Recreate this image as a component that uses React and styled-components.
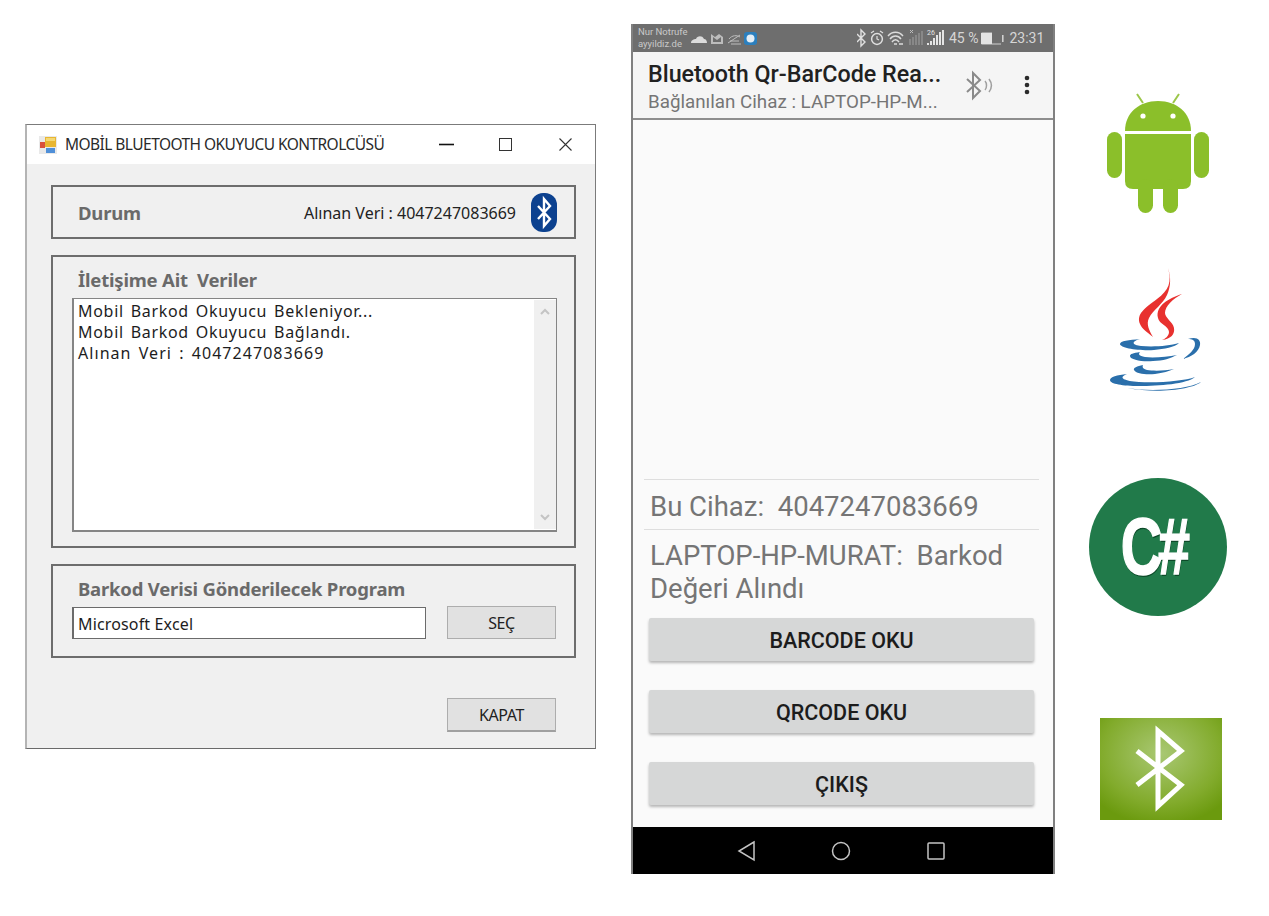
import React from 'react';
import styled, { createGlobalStyle } from 'styled-components';

const GlobalStyle = createGlobalStyle`
  html, body {
    margin: 0;
    background: #ffffff;
  }
`

const Page = styled.div`
  display: flex;
  align-items: flex-start;
  width: 1269px;
  height: 916px;
  overflow: hidden;
  background: #ffffff;
`

/* desktop window */
const Win = styled.div`
  box-sizing: border-box;
  width: 571px;
  height: 625px;
  margin: 124px 0 0 25px;
  display: flex;
  flex-direction: column;
  background: #f0f0f0;
  border-top: 1px solid #7b7b7b;
  border-right: 1px solid #7b7b7b;
  border-bottom: 1px solid #6a6a6a;
  border-left: 2px solid #b4b4b4;
  font-family: "Noto Sans", sans-serif;
`

const TitleBar = styled.div`
  height: 39px;
  flex: none;
  display: flex;
  align-items: center;
  padding-left: 12px;
  background: #ffffff;
`

const WinTitle = styled.span`
  margin-left: 8px;
  padding-bottom: 2px;
  flex: 1;
  font-size: 15.5px;
  letter-spacing: -0.55px;
  color: #2a2a2a;
  white-space: nowrap;
`

const WinCtrl = styled.svg`
  flex: none;
  width: 160px;
  height: 20px;
`

const WinBody = styled.div`
  flex: none;
  display: flex;
  flex-direction: column;
  gap: 16px;
  padding: 21px 19px 0 24px;
`

const Panel = styled.div`
  box-sizing: border-box;
  height: ${p => p.$h}px;
  border: 2px solid #6d6d6d;
  padding: 12px 17px 0 19px;
`

const StatusPanel = styled(Panel)`
  display: flex;
  align-items: center;
  padding: 0 17px 0 25px;
`

const PanelTitle = styled.div`
  height: 22px;
  line-height: 22px;
  margin: 0 0 ${p => p.$gap}px 6px;
  font-size: 18.5px;
  font-weight: 700;
  color: #6a6a6a;
  letter-spacing: -0.2px;
  white-space: pre;
`

const StatusLabel = styled(PanelTitle)`
  flex: 1;
  margin: 1px 0 0;
`

const Received = styled.span`
  font-size: 16px;
  color: #222222;
  white-space: nowrap;
  margin: 1px 15px 0 0;
`

const BtBadge = styled.svg`
  flex: none;
  width: 26px;
  height: 39px;
`

const LogBox = styled.div`
  box-sizing: border-box;
  width: 485px;
  height: 234px;
  display: flex;
  background: #ffffff;
  border: 1px solid #858585;
  border-bottom-width: 2px;
  border-left-width: 2px;
`

const LogLines = styled.div`
  flex: 1;
  padding: 2px 0 0 4px;
  font-size: 16px;
  line-height: 21px;
  letter-spacing: 0.7px;
  word-spacing: 2px;
  color: #1d1d1d;
`

const LogLine = styled.div`
  height: 21px;
  white-space: pre;
  letter-spacing: ${p => p.$wide ? '1.05px' : 'inherit'};
`

const ScrollTrack = styled.div`
  width: 22px;
  display: flex;
  flex-direction: column;
  justify-content: space-between;
  align-items: center;
  padding: 8px 0;
  background: #f0f0f0;
  margin: 1px 0;
`

const Row = styled.div`
  display: flex;
  align-items: flex-end;
  gap: 21px;
`

const TextInput = styled.div`
  box-sizing: border-box;
  width: 354px;
  height: 32px;
  padding-left: 4px;
  line-height: 32px;
  font-size: 16px;
  letter-spacing: 0.15px;
  color: #1d1d1d;
  background: #ffffff;
  border: 1px solid #6b6b6b;
  border-left-width: 2px;
`

const WinButton = styled.div`
  box-sizing: border-box;
  width: 109px;
  height: ${p => p.$h}px;
  display: flex;
  align-items: center;
  justify-content: center;
  font-size: 16px;
  letter-spacing: -0.4px;
  color: #222222;
  background: #e1e1e1;
  border: 1px solid #adadad;
  border-bottom: ${p => p.$thick ? '2px solid #a0a0a0' : '1px solid #adadad'};
`

const WinFooter = styled.div`
  display: flex;
  justify-content: flex-end;
  padding: 40px 39px 0 0;
`

/* phone */
const Phone = styled.div`
  box-sizing: border-box;
  width: 424px;
  height: 850px;
  margin: 24px 0 0 35px;
  display: flex;
  flex-direction: column;
  background: #fafafa;
  border-left: 2px solid #808080;
  border-right: 2px solid #808080;
  font-family: Roboto, sans-serif;
`

const StatusBar = styled.div`
  height: 28px;
  flex: none;
  display: flex;
  align-items: center;
  padding-left: 5px;
  background: #6e6e6e;
  color: #d6d6d6;
`

const Carrier = styled.div`
  width: 52px;
  font-size: 9.5px;
  line-height: 12px;
  color: #c9c9c9;
  white-space: nowrap;
`

const StatusIcons = styled.svg`
  flex: none;
  height: 28px;
  width: ${p => p.$w}px;
  margin-left: ${p => p.$ml || 0}px;
`

const StatusText = styled.span`
  font-size: ${p => p.$size}px;
  margin-left: ${p => p.$ml}px;
  white-space: nowrap;
`

const TinyLabel = styled.text`
  font-family: Roboto, sans-serif;
  font-size: 7px;
  fill: #e4e4e4;
`

const AppBar = styled.div`
  height: 66px;
  flex: none;
  display: flex;
  align-items: center;
  padding-left: 15px;
  background: #f5f5f5;
  border-bottom: 2px solid #8d8d8d;
`

const AppTitles = styled.div`
  width: 316px;
  padding-top: 4px;
  white-space: nowrap;
`

const AppTitle = styled.div`
  font-size: 23.3px;
  line-height: 28px;
  font-weight: 500;
  color: #212121;
`

const AppSub = styled.div`
  margin-top: 2px;
  font-size: 18.8px;
  line-height: 24px;
  color: #757575;
`

const BarIcon = styled.svg`
  flex: none;
  width: ${p => p.$w}px;
  height: 34px;
  margin-left: ${p => p.$ml}px;
`

const PhoneBody = styled.div`
  flex: 1;
  display: flex;
  flex-direction: column;
  justify-content: flex-end;
  padding: 0 14px 22px 11px;
`

const InfoRow = styled.div`
  padding: ${p => p.$pad};
  font-size: 27.5px;
  line-height: 33px;
  color: #757575;
  white-space: pre-wrap;
  border-top: 1px solid #dedede;
`

const PhoneButton = styled.div`
  box-sizing: border-box;
  height: 43px;
  margin: ${p => p.$top}px 5px 0 5px;
  padding-top: 1px;
  display: flex;
  align-items: center;
  justify-content: center;
  font-size: 21.5px;
  font-weight: 500;
  color: #1c1c1c;
  background: #d6d7d7;
  border-radius: 2px;
  box-shadow: 0 2px 3px rgba(0, 0, 0, 0.28);
`

const NavBar = styled.div`
  height: 47px;
  flex: none;
  display: flex;
  align-items: center;
  justify-content: center;
  background: #000000;
`

const NavIcons = styled.svg`
  width: 240px;
  height: 24px;
  margin-right: 4px;
`

/* logo column */
const Logos = styled.div`
  width: 138px;
  margin: 93px 0 0 34px;
  display: flex;
  flex-direction: column;
`

const Logo = styled.svg`
  display: block;
  width: ${p => p.$w}px;
  height: ${p => p.$h}px;
  margin: ${p => p.$top}px 0 0 ${p => p.$left}px;
`

const CSharp = styled.div`
  width: 138px;
  height: 138px;
  margin-top: 86px;
  display: flex;
  align-items: center;
  justify-content: center;
  border-radius: 50%;
  background: #217a4a;
`

const CSharpText = styled.span`
  margin-left: -10px;
  font-family: "Liberation Sans", sans-serif;
  font-size: 80px;
  line-height: 80px;
  font-weight: 700;
  color: #ffffff;
  letter-spacing: -6px;
  -webkit-text-stroke: 1.5px #ffffff;
  text-shadow: 1px 2px 0 #0d4a29;
  transform: scaleX(0.72);
`

function WindowIcon() {
  return (
    <svg width="18" height="18" viewBox="0 0 18 18">
      <rect x="0" y="0" width="18" height="18" fill="#e9e9e9" />
      <rect x="6" y="1" width="11" height="10" fill="#e8b632" />
      <rect x="7" y="2" width="9" height="3" fill="#f4d874" />
      <rect x="1" y="6" width="5" height="6" fill="#d9503c" />
      <rect x="7" y="12" width="9" height="5" fill="#4f8fd8" />
    </svg>
  );
}

function Chevron({ up }) {
  return (
    <svg width="10" height="7" viewBox="0 0 10 7">
      <path d={up ? 'M1 6 L5 2 L9 6' : 'M1 1 L5 5 L9 1'} fill="none" stroke="#c4c4c4" strokeWidth="2" />
    </svg>
  );
}

function JavaLogo() {
  return (
    <Logo $w={94} $h={124} $top={55} $left={20} viewBox="0 0 94 124">
      <g fill="#e8312f">
        <path d="M59 0 C63 14 60 22 48 31 C36 40 27 46 31 56 C33 61 38 64 44 69 C40 62 37 56 40 50 C44 42 54 36 58 27 C62 18 62 9 59 0 Z" />
        <path d="M73 26 C60 30 46 38 49 50 C50 56 60 58 60 64 C60 68 56 71 53 72 C62 71 66 66 65 60 C64 54 56 50 56 45 C56 38 64 31 73 26 Z" />
      </g>
      <g fill="#2a6fab">
        <path d="M31 71 C20 72 11 73 11 76 C11 80 30 83 45 82 C55 81 66 79 70 75 C60 78 45 79 32 78 C24 77 21 74 31 71 Z" />
        <path d="M79 71 C88 68 92 72 91 77 C90 84 82 89 74 91 C80 86 86 82 86 76 C86 72 83 71 79 71 Z" />
        <path d="M31 84 C24 85 21 86 21 88 C21 92 34 94 44 93 C54 93 62 90 68 87 C58 89 44 90 36 89 C30 88 29 86 31 84 Z" />
        <path d="M34 97 C28 98 24 100 25 102 C27 106 38 107 46 106 C54 105 60 103 65 101 C55 103 44 103 38 102 C34 101 33 99 34 97 Z" />
        <path d="M18 106 C8 107 1 109 1 112 C1 116 14 118 30 118 C50 118 78 116 86 109 C76 113 50 115 30 114 C16 113 8 110 18 106 Z" />
        <path d="M18 120 C40 124 78 122 92 114 C84 121 50 126 18 120 Z" />
      </g>
    </Logo>
  );
}

function AndroidLogo() {
  return (
    <Logo $w={102} $h={120} $top={0} $left={18} viewBox="0 0 102 120">
      <g fill="#8bbf2a">
        <path d="M18 38 C18 20 32 8 51 8 C70 8 84 20 84 38 Z" />
        <path d="M18 41 H84 V88 Q84 96 76 96 H26 Q18 96 18 88 Z" />
        <rect x="0" y="39" width="15" height="46" rx="7.5" />
        <rect x="87" y="39" width="15" height="46" rx="7.5" />
        <rect x="31" y="86" width="15" height="34" rx="7.5" />
        <rect x="56" y="86" width="15" height="34" rx="7.5" />
      </g>
      <path d="M30 1 L36 10 M72 1 L66 10" stroke="#9cc74a" strokeWidth="2" />
      <circle cx="36" cy="23" r="2.6" fill="#ffffff" />
      <circle cx="66" cy="23" r="2.6" fill="#ffffff" />
    </Logo>
  );
}

function BluetoothSquare() {
  return (
    <Logo $w={122} $h={102} $top={102} $left={11} viewBox="0 0 122 102">
      <defs>
        <radialGradient id="btg" cx="50%" cy="35%" r="70%">
          <stop offset="0%" stopColor="#a9c873" />
          <stop offset="70%" stopColor="#82ab2c" />
          <stop offset="100%" stopColor="#6b9a0e" />
        </radialGradient>
      </defs>
      <rect width="122" height="102" fill="url(#btg)" />
      <path d="M37 33 L81 67 L58 88 V13 L81 33 L37 67" fill="none" stroke="#ffffff" strokeWidth="5" />
    </Logo>
  );
}

export default function App() {
  return (
    <Page>
      <GlobalStyle />
      <Win>
        <TitleBar>
          <WindowIcon />
          <WinTitle>MOBİL BLUETOOTH OKUYUCU KONTROLCÜSÜ</WinTitle>
          <WinCtrl viewBox="0 0 160 20">
            <path d="M4 9.5 H19" stroke="#111111" strokeWidth="1.6" />
            <rect x="64.5" y="3.5" width="12" height="12" fill="none" stroke="#333333" />
            <path d="M124.5 3.5 L136.5 15.5 M136.5 3.5 L124.5 15.5" stroke="#333333" strokeWidth="1.1" />
          </WinCtrl>
        </TitleBar>
        <WinBody>
          <StatusPanel $h={54}>
            <StatusLabel>Durum</StatusLabel>
            <Received>Alınan Veri : 4047247083669</Received>
            <BtBadge viewBox="0 0 26 39">
              <rect width="26" height="39" rx="12" fill="#0c418f" />
              <path d="M7 13 L19 26 L13 33 V6 L19 13 L7 26" fill="none" stroke="#ffffff" strokeWidth="2.4" />
            </BtBadge>
          </StatusPanel>
          <Panel $h={293}>
            <PanelTitle $gap={7}>İletişime Ait  Veriler</PanelTitle>
            <LogBox>
              <LogLines>
                <LogLine>Mobil Barkod Okuyucu Bekleniyor...</LogLine>
                <LogLine>Mobil Barkod Okuyucu Bağlandı.</LogLine>
                <LogLine $wide>Alınan Veri : 4047247083669</LogLine>
              </LogLines>
              <ScrollTrack>
                <Chevron up />
                <Chevron />
              </ScrollTrack>
            </LogBox>
          </Panel>
          <Panel $h={94}>
            <PanelTitle $gap={6}>Barkod Verisi Gönderilecek Program</PanelTitle>
            <Row>
              <TextInput>Microsoft Excel</TextInput>
              <WinButton $h={33}>SEÇ</WinButton>
            </Row>
          </Panel>
        </WinBody>
        <WinFooter>
          <WinButton $h={34} $thick>KAPAT</WinButton>
        </WinFooter>
      </Win>

      <Phone>
        <StatusBar>
          <Carrier>Nur Notrufe<br />ayyildiz.de</Carrier>
          <StatusIcons $w={70} viewBox="0 0 70 28">
            <path d="M1 19 C1 16 4 15 6 15 C7 12 12 11 14 15 C16 15 17 17 17 19 Z" fill="#dcdcdc" />
            <path d="M21 10 L25 13 L29 10 L33 13 V20 H21 Z M23 13 V18 H31 V13 L27 16 Z" fill="#bdbdbd" fillRule="evenodd" />
            <path d="M38 19 L50 11 M39 15 C42 11 47 11 50 13 M41 20 H51 M40 17 H49" stroke="#bdbdbd" strokeWidth="1" fill="none" />
            <rect x="54" y="8" width="13" height="13" rx="3" fill="#2c7fbd" />
            <circle cx="60.5" cy="14.5" r="4" fill="#e4eef6" />
          </StatusIcons>
          <StatusIcons $w={90} $ml={97} viewBox="0 0 90 28">
            <path d="M0 10 L8 18 L4 22 V6 L8 10 L0 18" fill="none" stroke="#e0e0e0" strokeWidth="1.4" />
            <circle cx="20" cy="15" r="5.4" fill="none" stroke="#e0e0e0" strokeWidth="1.5" />
            <path d="M20 12 V15 L22 16 M14 9 L17 7 M26 9 L23 7" fill="none" stroke="#e0e0e0" strokeWidth="1.2" />
            <path d="M31 12 C35 7 42 7 46 12 M33 15 C36 11 41 11 44 15 M35 18 C37 15 40 15 42 18" fill="none" stroke="#dcdcdc" strokeWidth="1.4" />
            <path d="M37 20 H40 M42 20 H46" stroke="#dcdcdc" strokeWidth="1.4" />
            <path d="M53 6 L56 9 M56 6 L53 9" stroke="#bdbdbd" strokeWidth="1" />
            <path d="M53 15 V21 M56 13 V21 M59 11 V21 M62 9 V21 M65 7 V21" stroke="#8f8f8f" strokeWidth="1.6" />
            <TinyLabel x="70" y="11">26</TinyLabel>
            <path d="M71 21 V19 M74 21 V17 M77 21 V14 M80 21 V11 M83 21 V8 M86 21 V6" stroke="#e4e4e4" strokeWidth="2" />
          </StatusIcons>
          <StatusText $size={14} $ml={2}>45 %</StatusText>
          <StatusIcons $w={24} $ml={3} viewBox="0 0 24 28">
            <path d="M0.5 20 H20 M0.5 9 H11" stroke="#d0d0d0" fill="none" />
            <rect x="0" y="9" width="11" height="11" fill="#e4e4e4" />
            <rect x="21" y="11" width="1.6" height="7" fill="#d0d0d0" />
          </StatusIcons>
          <StatusText $size={14} $ml={4}>23:31</StatusText>
        </StatusBar>
        <AppBar>
          <AppTitles>
            <AppTitle>Bluetooth Qr-BarCode Rea...</AppTitle>
            <AppSub>Bağlanılan Cihaz : LAPTOP-HP-M...</AppSub>
          </AppTitles>
          <BarIcon $w={28} $ml={2} viewBox="0 0 28 34">
            <path d="M1 11 L14 23 L7 30 V5 L14 12 L1 24" fill="none" stroke="#8a8a8a" strokeWidth="2" />
            <path d="M19 13 C21 15 21 20 19 22 M23 11 C26 15 26 20 23 24" fill="none" stroke="#a0a0a0" strokeWidth="1.5" />
          </BarIcon>
          <BarIcon $w={8} $ml={29} viewBox="0 0 8 34">
            <circle cx="4" cy="10" r="2.3" fill="#2b2b2b" />
            <circle cx="4" cy="17" r="2.3" fill="#2b2b2b" />
            <circle cx="4" cy="24" r="2.3" fill="#2b2b2b" />
          </BarIcon>
        </AppBar>
        <PhoneBody>
          <InfoRow $pad="10px 0 6px 6px">{'Bu Cihaz:  4047247083669'}</InfoRow>
          <InfoRow $pad="9px 0 0 6px">{'LAPTOP-HP-MURAT:  Barkod\nDeğeri Alındı'}</InfoRow>
          <PhoneButton $top={13}>BARCODE OKU</PhoneButton>
          <PhoneButton $top={29}>QRCODE OKU</PhoneButton>
          <PhoneButton $top={29}>ÇIKIŞ</PhoneButton>
        </PhoneBody>
        <NavBar>
          <NavIcons viewBox="0 0 240 24">
            <path d="M33 3 L18 12 L33 21 Z" fill="none" stroke="#c4c4c4" strokeWidth="1.5" />
            <circle cx="120" cy="12" r="8.5" fill="none" stroke="#c4c4c4" strokeWidth="1.5" />
            <rect x="207" y="4" width="16" height="16" rx="1" fill="none" stroke="#c4c4c4" strokeWidth="1.5" />
          </NavIcons>
        </NavBar>
      </Phone>

      <Logos>
        <AndroidLogo />
        <JavaLogo />
        <CSharp><CSharpText>C#</CSharpText></CSharp>
        <BluetoothSquare />
      </Logos>
    </Page>
  );
}
